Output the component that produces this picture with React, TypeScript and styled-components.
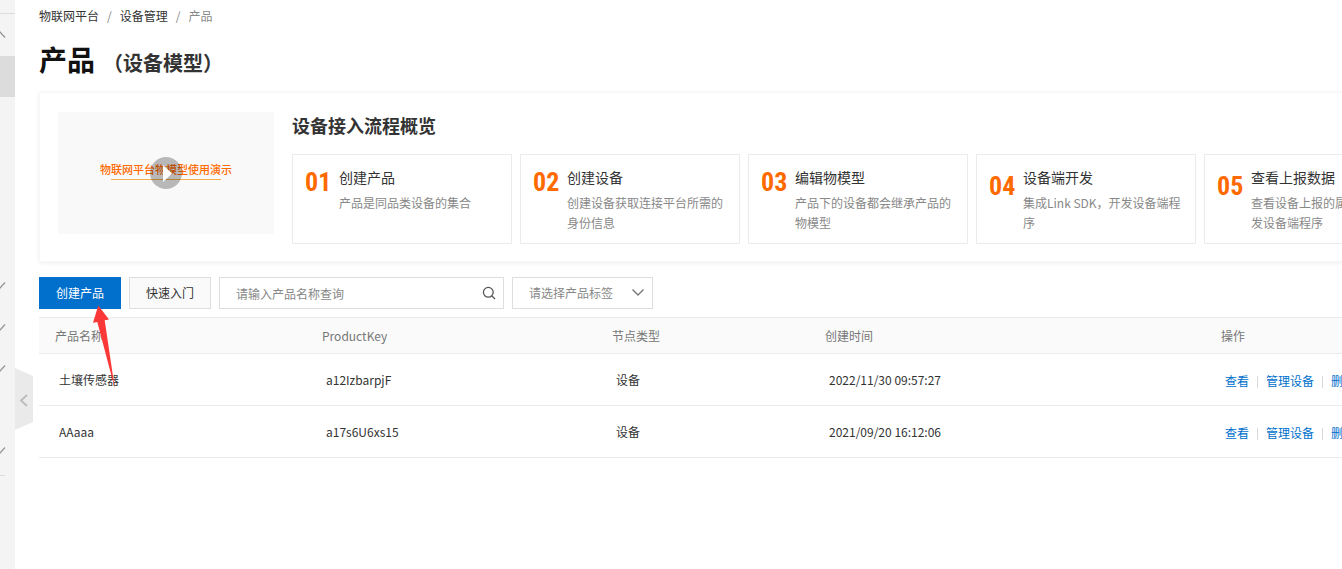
import React from 'react';
import styled, { createGlobalStyle } from 'styled-components';

const GlobalStyle = createGlobalStyle`
  *, *::before, *::after { box-sizing: border-box; }
  body {
    margin: 0;
    background: #fff;
    color: #333;
    font-family: "Noto Sans CJK SC", "Liberation Sans", sans-serif;
    font-size: 12px;
    line-height: 20px;
  }
  button, input, select { font: inherit; color: inherit; }
  a { text-decoration: none; }
`;

const Page = styled.div`
  position: relative;
  display: flex;
  min-height: 100vh;
  overflow: hidden;
`;

const Sidebar = styled.nav`
  position: relative;
  flex: 0 0 15px;
  background: #f4f4f4;
`;

const SideHead = styled.div`
  height: 14px;
  border-bottom: 1px solid #ddd;
`;

const SideItem = styled.div<{ $active?: boolean }>`
  display: flex;
  align-items: center;
  height: 42px;
  background: ${(p) => (p.$active ? '#dcdcdc' : 'transparent')};
  & + & { height: 41px; }
  svg { flex: none; margin-left: -7px; }
`;

const SideGap = styled.div`
  height: 167px;
`;

const SideRule = styled.div`
  width: 5px;
  margin-top: 5px;
  border-top: 1px solid #ddd;
`;

const CollapseButton = styled.button`
  position: absolute;
  top: 368px;
  left: 15px;
  width: 18px;
  height: 62px;
  padding: 0;
  border: 0;
  background: none;
  svg { display: block; }
`;

const Main = styled.main`
  flex: 1 1 0;
  min-width: 0;
  padding: 6px 0 0 24px;
`;

const Breadcrumb = styled.nav`
  display: flex;
  gap: 8px;
  color: #888;
  a { color: #333; }
`;

const Title = styled.h1`
  display: flex;
  align-items: baseline;
  gap: 8px;
  margin: 15px 0 11px;
  color: #111;
  font-size: 28px;
  line-height: 36px;
  font-weight: 700;
  white-space: nowrap;
  small { color: #333; font-size: 20px; }
`;

const Overview = styled.section`
  display: flex;
  gap: 18px;
  min-width: 1420px;
  padding: 19px 19px 17px 18px;
  border: 1px solid #f7f7f7;
  box-shadow: 0 1px 4px rgba(0, 0, 0, 0.07);
`;

const Video = styled.button`
  position: relative;
  display: flex;
  flex: 0 0 216px;
  flex-direction: column;
  align-items: center;
  height: 122px;
  padding: 47px 0 0;
  border: 0;
  background: #f9f9f9;
  color: #ff6a00;
  font-size: 11px;
  line-height: 20px;
  font-weight: 500;
`;

const VideoLine = styled.span`
  width: 110px;
  border-top: 1px solid #f5b04c;
`;

const PlayIcon = styled.svg`
  position: absolute;
  top: 45px;
  left: 92px;
`;

const Flow = styled.div`
  flex: 1;
`;

const FlowTitle = styled.h2`
  margin: 0 0 16px;
  font-size: 18px;
  line-height: 26px;
  font-weight: 700;
`;

const Steps = styled.ol`
  display: flex;
  gap: 8px;
  margin: 0;
  padding: 0;
  list-style: none;
`;

const Step = styled.li`
  display: flex;
  flex: 0 0 220px;
  height: 90px;
  padding: 8px 8px 0 12px;
  border: 1px solid #ebebeb;
`;

const StepNumber = styled.span<{ $low?: boolean }>`
  flex: 0 0 34px;
  padding-top: ${(p) => (p.$low ? 7 : 3)}px;
  color: #ff6a00;
  font-family: "Liberation Sans Narrow", "Roboto Condensed", "Liberation Sans", sans-serif;
  font-size: 26px;
  line-height: 32px;
  font-weight: 700;
`;

const StepTitle = styled.h3`
  margin: 0;
  font-size: 14px;
  line-height: 28px;
  font-weight: 400;
`;

const StepText = styled.p`
  margin: 2px 0 0;
  color: #888;
`;

const Toolbar = styled.form`
  display: flex;
  gap: 8px;
  margin: 15px 0 8px;
`;

const Button = styled.button<{ $primary?: boolean }>`
  flex: 0 0 82px;
  height: 32px;
  padding: 0;
  border: 1px solid ${(p) => (p.$primary ? '#0070cc' : '#dedede')};
  background: ${(p) => (p.$primary ? '#0070cc' : '#fafafa')};
  color: ${(p) => (p.$primary ? '#fff' : '#333')};
`;

const Field = styled.label<{ $width: number }>`
  display: flex;
  flex: 0 0 ${(p) => p.$width}px;
  align-items: center;
  height: 32px;
  padding-right: 7px;
  border: 1px solid #dedede;
  svg { flex: none; }
  input, select {
    flex: 1;
    min-width: 0;
    height: 30px;
    padding: 0 0 0 16px;
    border: 0;
    outline: 0;
    appearance: none;
    background: none;
    color: #888;
  }
  input::placeholder { color: #888; opacity: 1; }
`;

const Table = styled.table`
  width: 100%;
  min-width: 1340px;
  table-layout: fixed;
  border-collapse: separate;
  border-spacing: 0;
  text-align: left;
`;

const HeadCell = styled.th<{ $width?: number }>`
  width: ${(p) => (p.$width ? `${p.$width}px` : 'auto')};
  height: 37px;
  padding: 0 16px;
  border: solid #ebebeb;
  border-width: 1px 0;
  background: #fafafa;
  color: #777;
  font-weight: 400;
`;

const Cell = styled.td`
  height: 52px;
  padding: 0 20px;
  border-bottom: 1px solid #ebebeb;
`;

const Actions = styled.div`
  display: flex;
  align-items: center;
  padding-top: 3px;
  white-space: nowrap;
  a { color: #0070cc; }
  a + a::before {
    content: "";
    display: inline-block;
    height: 12px;
    margin: 0 8px;
    border-left: 1px solid #d9d9d9;
    vertical-align: -2px;
  }
`;

const Pointer = styled.svg`
  position: absolute;
  top: 304px;
  left: 92px;
  pointer-events: none;
`;

const Chevron = ({ up }: { up?: boolean }) => (
  <svg width="14" height="14" viewBox="0 0 14 14" fill="none" stroke="#999" strokeWidth="1.4">
    <path d={up ? 'M1.5 10 7 4l5 5.5' : 'M1.5 4.5 7 10l5-5.5'} />
  </svg>
);

const steps = [
  { title: '创建产品', text: '产品是同品类设备的集合' },
  { title: '创建设备', text: '创建设备获取连接平台所需的身份信息' },
  { title: '编辑物模型', text: '产品下的设备都会继承产品的物模型' },
  { title: '设备端开发', text: '集成Link SDK，开发设备端程序' },
  { title: '查看上报数据', text: '查看设备上报的属性数据，开发设备端程序' },
];

const products = [
  { name: '土壤传感器', key: 'a12IzbarpjF', type: '设备', time: '2022/11/30 09:57:27' },
  { name: 'AAaaa', key: 'a17s6U6xs15', type: '设备', time: '2021/09/20 16:12:06' },
];

export default function App() {
  return (
    <Page>
      <GlobalStyle />
      <Sidebar aria-label="侧边栏">
        <SideHead />
        <SideItem><Chevron up /></SideItem>
        <SideItem $active />
        <SideGap />
        <SideItem><Chevron /></SideItem>
        <SideItem><Chevron /></SideItem>
        <SideItem><Chevron /></SideItem>
        <SideItem />
        <SideItem><Chevron /></SideItem>
        <SideRule />
        <CollapseButton type="button" aria-label="收起">
          <svg width="18" height="62" viewBox="0 0 18 62" fill="none">
            <path d="M0 0 18 8V54L0 62Z" fill="#eaeaea" />
            <path d="M12 27 6 32.5l6 5.5" stroke="#bbb" strokeWidth="1.8" />
          </svg>
        </CollapseButton>
      </Sidebar>

      <Main>
        <Breadcrumb aria-label="位置">
          <a href="#iot">物联网平台</a>
          <span>/</span>
          <a href="#devices">设备管理</a>
          <span>/</span>
          <span>产品</span>
        </Breadcrumb>
        <Title>产品<small>（设备模型）</small></Title>

        <Overview>
          <Video type="button">
            物联网平台物模型使用演示
            <VideoLine />
            <PlayIcon width="32" height="32" viewBox="0 0 32 32">
              <circle cx="16" cy="16" r="16" fill="#000" fillOpacity=".26" />
              <path d="M13 8v17l9-8.5Z" fill="#fff" />
            </PlayIcon>
          </Video>
          <Flow>
            <FlowTitle>设备接入流程概览</FlowTitle>
            <Steps>
              {steps.map((step, i) => (
                <Step key={step.title}>
                  <StepNumber $low={i > 2}>{`0${i + 1}`}</StepNumber>
                  <div>
                    <StepTitle>{step.title}</StepTitle>
                    <StepText>{step.text}</StepText>
                  </div>
                </Step>
              ))}
            </Steps>
          </Flow>
        </Overview>

        <Toolbar>
          <Button type="button" $primary>创建产品</Button>
          <Button type="button">快速入门</Button>
          <Field $width={285}>
            <input type="text" placeholder="请输入产品名称查询" aria-label="产品名称" />
            <svg width="14" height="14" viewBox="0 0 14 14" fill="none" stroke="#555" strokeWidth="1.3">
              <circle cx="6.3" cy="6.3" r="4.9" />
              <path d="m10 10 3 3" />
            </svg>
          </Field>
          <Field $width={141}>
            <select aria-label="产品标签">
              <option>请选择产品标签</option>
            </select>
            <svg width="14" height="14" viewBox="0 0 14 14" fill="none" stroke="#777" strokeWidth="1.4">
              <path d="M1.5 3.5 7 9l5.5-5.5" />
            </svg>
          </Field>
        </Toolbar>

        <Table>
          <thead>
            <tr>
              <HeadCell $width={267}>产品名称</HeadCell>
              <HeadCell $width={290}>ProductKey</HeadCell>
              <HeadCell $width={213}>节点类型</HeadCell>
              <HeadCell $width={396}>创建时间</HeadCell>
              <HeadCell>操作</HeadCell>
            </tr>
          </thead>
          <tbody>
            {products.map((p) => (
              <tr key={p.key}>
                <Cell>{p.name}</Cell>
                <Cell>{p.key}</Cell>
                <Cell>{p.type}</Cell>
                <Cell>{p.time}</Cell>
                <Cell>
                  <Actions>
                    <a href="#view">查看</a>
                    <a href="#manage">管理设备</a>
                    <a href="#delete">删除</a>
                  </Actions>
                </Cell>
              </tr>
            ))}
          </tbody>
        </Table>
      </Main>

      <Pointer width="26" height="86" viewBox="0 0 26 86" aria-hidden="true">
        <path d="M6.3 1.5 17 15.5l-4.3.8L22.8 84.5 5.3 18 1 18.7Z" fill="#fb3838" />
      </Pointer>
    </Page>
  );
}
